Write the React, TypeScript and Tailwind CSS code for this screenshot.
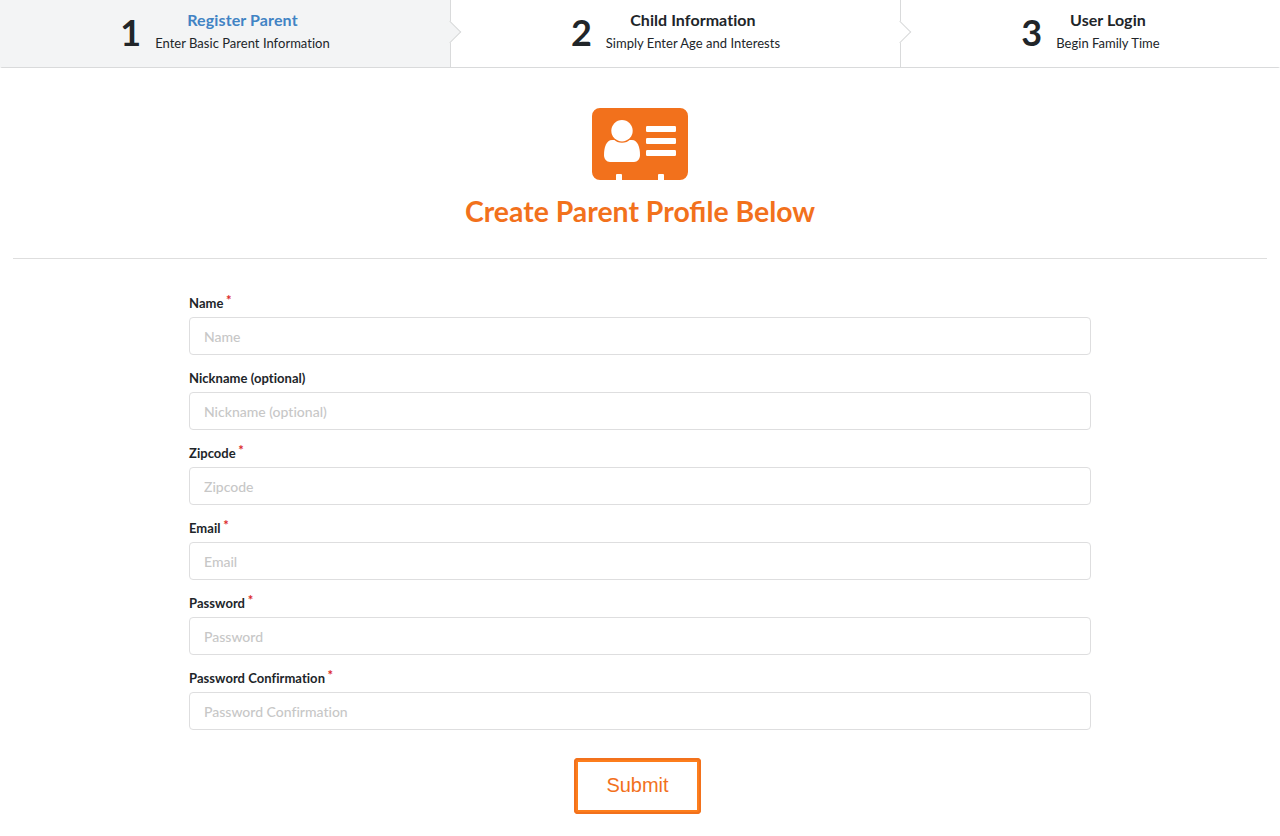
import React from "react";

const steps = [
  { n: "1", title: "Register Parent", desc: "Enter Basic Parent Information", active: true },
  { n: "2", title: "Child Information", desc: "Simply Enter Age and Interests" },
  { n: "3", title: "User Login", desc: "Begin Family Time" },
];

const fields = [
  { label: "Name", required: true },
  { label: "Nickname (optional)", required: false },
  { label: "Zipcode", required: true },
  { label: "Email", required: true },
  { label: "Password", required: true },
  { label: "Password Confirmation", required: true },
];

export default function App() {
  return (
    <div className="h-[836px] overflow-hidden bg-white font-['Lato',sans-serif] text-[#212529] [font-variant-ligatures:none]">
      <div className="flex h-[68px] rounded-b-[2px] border-b border-[#d9dadb]">
        {steps.map((s, i) => (
          <div
            key={s.n}
            className={`relative flex shrink-0 items-start justify-center ${
              i === 0 ? "w-[451px]" : i === 1 ? "w-[450px]" : "w-[379px]"
            } ${i < 2 ? "border-r border-[#d9dadb]" : ""} ${s.active ? "bg-[#f3f4f5]" : "bg-white"}`}
          >
            <div className="mt-[10px] mr-[14px] text-[36px] leading-[44px] font-bold">{s.n}</div>
            <div className="mt-[11px] text-center">
              <div className={`text-[16px] leading-[18px] font-bold ${s.active ? "tracking-[0.12px] text-[#4183c4]" : "tracking-[0.06px]"}`}>{s.title}</div>
              <div className="mt-[4px] text-[13px] leading-[20px] tracking-[0.02px]">{s.desc}</div>
            </div>
            {i < 2 && (
              <div
                className={`absolute top-[24px] right-[-8px] z-10 h-[16px] w-[16px] rotate-45 border-t border-r border-[#d9dadb] ${
                  s.active ? "bg-[#f3f4f5]" : "bg-white"
                }`}
              />
            )}
          </div>
        ))}
      </div>
      <header className="mx-[13px] flex h-[191px] flex-col items-center border-b border-[#dedede] pt-[40px]">
        <svg width="96" height="72" viewBox="0 0 96 72">
          <path fill="#f2711c" d="M8 0h80a8 8 0 0 1 8 8v56a8 8 0 0 1-8 8H72v-5a1 1 0 0 0-1-1h-4a1 1 0 0 0-1 1v5H30v-5a1 1 0 0 0-1-1h-4a1 1 0 0 0-1 1v5H8a8 8 0 0 1-8-8V8a8 8 0 0 1 8-8z" />
          <path fill="#fff" d="M12 47c0-8 2.500-15 8-15h20c5.500 0 8 7 8 15 0 4-2.500 7-6 7H18c-3.500 0-6-3-6-7z" />
          <circle cx="30" cy="22.700" r="12" fill="#f2711c" />
          <circle cx="30" cy="22.700" r="10.700" fill="#fff" />
          <rect x="54" y="18" width="30" height="6" rx="1.200" fill="#fff" />
          <rect x="54" y="30" width="30" height="6" rx="1.200" fill="#fff" />
          <rect x="54" y="42" width="30" height="6" rx="1.200" fill="#fff" />
        </svg>
        <h1 className="mt-[13px] text-[28.400px] leading-[36px] font-bold text-[#f2711c] [font-variant-ligatures:normal]">Create Parent Profile Below</h1>
      </header>
      <form className="mx-auto w-[902px] pt-[35px]">
        {fields.map((f) => (
          <div key={f.label} className="h-[75px]">
            <label className="block h-[23px] text-[13px] leading-[18px] font-bold tracking-[0.04px]">
              {f.label}
              {f.required && <span className="relative -top-[3px] ml-[2.600px] text-[#db2828]">*</span>}
            </label>
            <input
              placeholder={f.label}
              className="block h-[38px] w-full rounded border border-[#dededf] px-[14px] pt-px text-[14px] font-medium outline-none placeholder:text-[#c7c7c7]"
            />
          </div>
        ))}
        <button
          type="button"
          className="mt-[14px] ml-[385px] block h-[56px] w-[127px] rounded border-4 border-[#fd7e1c] pb-[2px] font-['Liberation_Sans',sans-serif] text-[20px] text-[#f2711c] outline-2 -outline-offset-2 outline-[#f2711c]"
        >
          Submit
        </button>
      </form>
    </div>
  );
}
